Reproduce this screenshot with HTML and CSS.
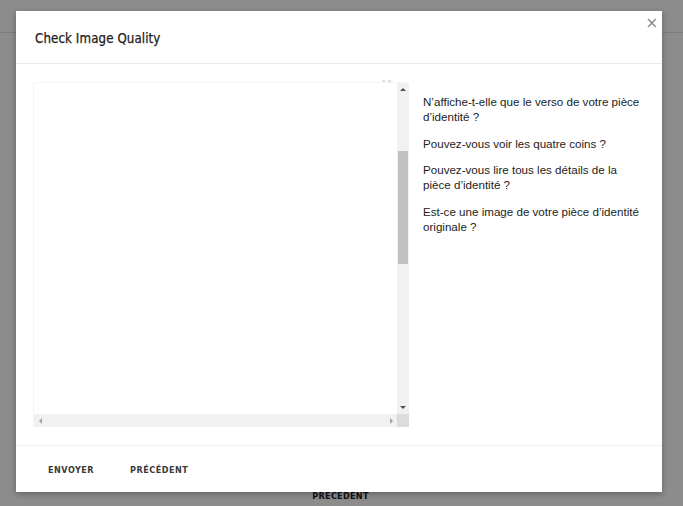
FILE: index.html
```html
<!DOCTYPE html>
<html lang="fr">
<head>
<meta charset="utf-8">
<title>Check Image Quality</title>
<link rel="stylesheet" href="styles.css">
</head>
<body>
<div class="page">
  <div class="page-header"></div>
  <div class="page-main"></div>
  <div class="page-footer"><span class="page-btn">PRÉCÉDENT</span></div>
</div>
<div class="overlay"></div>
<div class="modal">
  <div class="modal-header">
    <h2 class="modal-title">Check Image Quality</h2>
    <span class="close">×</span>
  </div>
  <div class="modal-body">
    <div class="viewer">
      <div class="viewer-main">
        <div class="viewer-content"><span class="faint">≈ ∝·</span></div>
        <div class="vbar">
          <span class="arrow up"></span>
          <div class="vtrack"><div class="vthumb"></div></div>
          <span class="arrow down"></span>
        </div>
      </div>
      <div class="hbar">
        <span class="arrow left"></span>
        <div class="htrack"></div>
        <span class="arrow right"></span>
        <span class="corner"></span>
      </div>
    </div>
    <div class="questions">
      <p>N’affiche-t-elle que le verso de votre pièce d’identité ?</p>
      <p>Pouvez-vous voir les quatre coins ?</p>
      <p>Pouvez-vous lire tous les détails de la pièce d’identité ?</p>
      <p>Est-ce une image de votre pièce d’identité originale ?</p>
    </div>
  </div>
  <div class="modal-footer">
    <button class="btn">ENVOYER</button>
    <button class="btn">PRÉCÉDENT</button>
  </div>
</div>
</body>
</html>
```
FILE: styles.css
```css
* { box-sizing: border-box; }
html, body { margin: 0; padding: 0; }
body {
  width: 683px;
  height: 506px;
  overflow: hidden;
  background: #fff;
  font-family: "Liberation Sans", Arial, sans-serif;
  position: relative;
}
.page {
  display: flex;
  flex-direction: column;
  height: 506px;
}
.page-header {
  height: 33px;
  border-bottom: 1px solid #e3e3e3;
  flex: none;
}
.page-main { flex: 1; }
.page-footer {
  height: 20px;
  display: flex;
  justify-content: center;
  padding-right: 2px;
  padding-top: 5px;
}
.page-btn {
  font-family: "DejaVu Sans Condensed", "DejaVu Sans", sans-serif;
  font-weight: bold;
  font-size: 9px;
  letter-spacing: 0.3px;
  color: #222;
}
.overlay {
  position: absolute;
  inset: 0;
  background: rgba(0,0,0,0.45);
}
.modal {
  position: absolute;
  left: 16px;
  top: 11px;
  width: 646px;
  height: 481px;
  background: #fff;
  box-shadow: 0 2px 6px rgba(0,0,0,0.3);
  display: flex;
  flex-direction: column;
}
.modal-header {
  height: 53px;
  border-bottom: 1px solid #ebebeb;
  display: flex;
  align-items: center;
  padding-left: 19px;
  padding-top: 2px;
  flex: none;
}
.modal-title {
  margin: 0;
  font-family: "DejaVu Sans Condensed", "DejaVu Sans", sans-serif;
  font-weight: normal;
  font-size: 13.2px;
  color: #1e1e1e;
  letter-spacing: 0.1px;
  -webkit-text-stroke: 0.25px #1e1e1e;
}
.close {
  position: absolute;
  right: 4px;
  top: 3px;
  font-family: "DejaVu Sans", sans-serif;
  font-size: 15px;
  color: #8a8a8a;
}
.modal-body {
  flex: 1;
  display: flex;
  padding: 18px 19px 0 17px;
}
.viewer {
  width: 376px;
  height: 345px;
  display: flex;
  flex-direction: column;
  border-left: 1px solid #f4f4f4;
  border-top: 1px solid #f6f6f6;
  flex: none;
  position: relative;
}
.viewer-main {
  flex: 1;
  display: flex;
}
.viewer-content {
  flex: 1;
  background: #fff;
  position: relative;
}
.faint {
  position: absolute;
  right: 4px;
  top: -6px;
  font-size: 6px;
  color: #bbb;
}
.vbar {
  width: 12px;
  background: #f1f1f1;
  display: flex;
  flex-direction: column;
  align-items: center;
}
.vtrack {
  flex: 1;
  width: 100%;
  position: relative;
}
.vthumb {
  position: absolute;
  left: 1px;
  right: 1px;
  top: 55px;
  height: 113px;
  background: #c1c1c1;
}
.arrow {
  width: 12px;
  height: 13px;
  flex: none;
  display: flex;
  align-items: center;
  justify-content: center;
}
.arrow::after {
  content: "";
  width: 0;
  height: 0;
  border: 3px solid transparent;
}
.arrow.up::after { border-bottom: 3px solid #505050; border-top-width: 0; }
.arrow.down::after { border-top: 3px solid #505050; border-bottom-width: 0; }
.arrow.left::after { border-right: 3px solid #a3a3a3; border-left-width: 0; }
.arrow.right::after { border-left: 3px solid #a3a3a3; border-right-width: 0; }
.hbar {
  height: 13px;
  display: flex;
  background: #f1f1f1;
  flex: none;
}
.htrack { flex: 1; }
.corner {
  width: 12px;
  background: #dcdcdc;
}
.questions {
  padding-left: 14px;
  padding-top: 12px;
  flex: 1;
}
.questions p {
  margin: 0 0 11.5px;
  font-size: 11.6px;
  line-height: 15px;
  color: #222;
}
.modal-footer {
  height: 47px;
  border-top: 1px solid #f0f0f0;
  display: flex;
  align-items: center;
  padding-left: 23px;
  gap: 18px;
  flex: none;
}
.btn {
  background: none;
  border: none;
  padding: 4px 9px;
  font-family: "DejaVu Sans Condensed", "DejaVu Sans", sans-serif;
  font-weight: bold;
  font-size: 9px;
  letter-spacing: 0.5px;
  color: #3a3a3a;
  margin-top: 2px;
}
```
